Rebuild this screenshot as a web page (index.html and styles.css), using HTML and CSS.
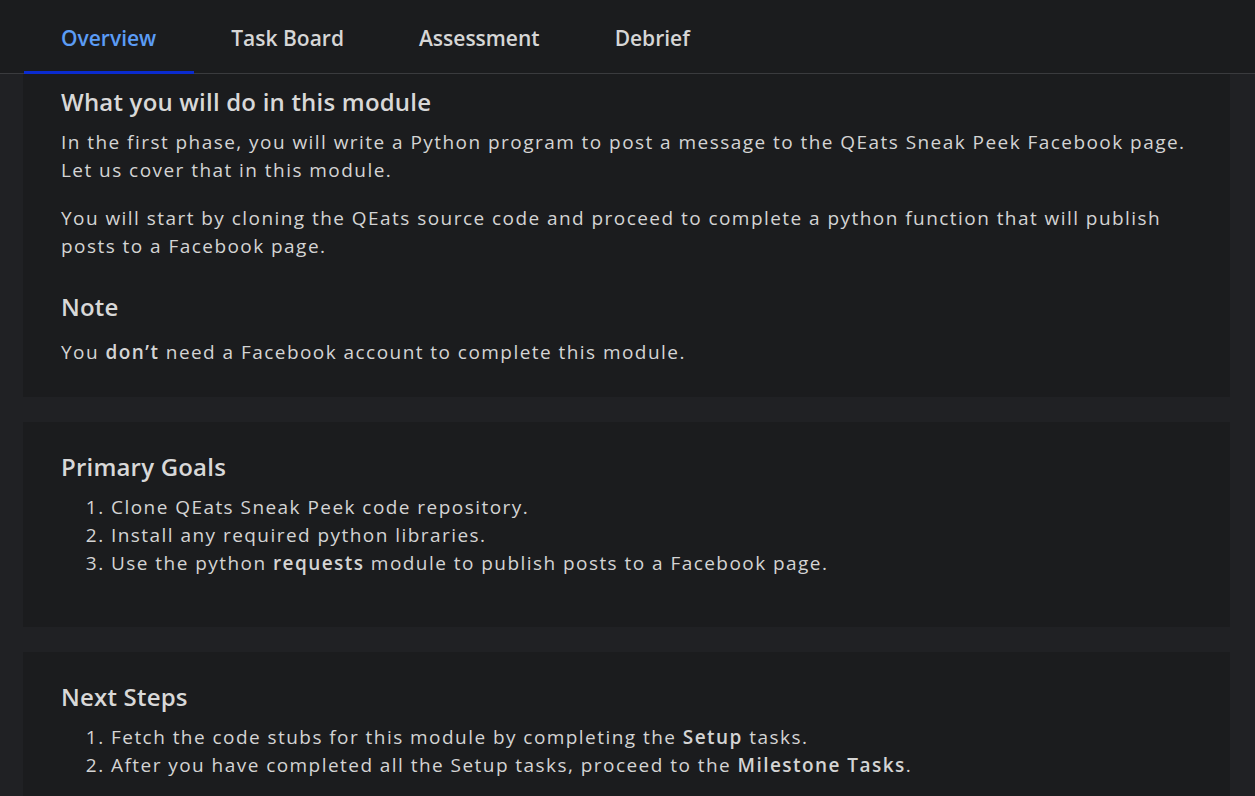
FILE: index.html
```html
<!DOCTYPE html>
<html lang="en">
<head>
<meta charset="utf-8">
<title>Module Overview</title>
<link rel="stylesheet" href="styles.css">
</head>
<body>
<header class="tabbar">
  <nav class="tabs">
    <a class="tab active">Overview</a>
    <a class="tab">Task Board</a>
    <a class="tab">Assessment</a>
    <a class="tab">Debrief</a>
  </nav>
</header>
<main class="content">
  <section class="card card-first">
    <h2 class="card-title">What you will do in this module</h2>
    <p class="text">In the first phase, you will write a Python program to post a message to the QEats Sneak Peek Facebook page. Let us cover that in this module.</p>
    <p class="text">You will start by cloning the QEats source code and proceed to complete a python function that will publish posts to a Facebook page.</p>
    <h2 class="card-title note-title">Note</h2>
    <p class="text">You <strong>don’t</strong> need a Facebook account to complete this module.</p>
  </section>
  <section class="card">
    <h2 class="card-title">Primary Goals</h2>
    <ol class="list">
      <li>Clone QEats Sneak Peek code repository.</li>
      <li>Install any required python libraries.</li>
      <li>Use the python <strong>requests</strong> module to publish posts to a Facebook page.</li>
    </ol>
  </section>
  <section class="card">
    <h2 class="card-title">Next Steps</h2>
    <ol class="list">
      <li>Fetch the code stubs for this module by completing the <strong>Setup</strong> tasks.</li>
      <li>After you have completed all the Setup tasks, proceed to the <strong>Milestone Tasks</strong>.</li>
    </ol>
  </section>
</main>
</body>
</html>
```
FILE: styles.css
```css
html, body {
  margin: 0;
  padding: 0;
}
body {
  background: #202124;
  color: #d4d4d4;
  font-family: "Open Sans", "Noto Sans", sans-serif;
  height: 796px;
  overflow: hidden;
}
.tabbar {
  background: #1b1c1e;
  border-bottom: 1px solid #3a3b3e;
  height: 74px;
  box-sizing: border-box;
}
.tabs {
  display: flex;
  padding-left: 23.5px;
  height: 100%;
}
.tab {
  display: flex;
  align-items: center;
  padding: 4px 37.5px 0;
  font-size: 21px;
  font-weight: 600;
  color: #d6d6d6;
  border-bottom: 3px solid transparent;
  box-sizing: border-box;
  height: 74px;
}
.tab.active {
  color: #5b9cf6;
  border-bottom-color: #0a2bd0;
}
.content {
  display: flex;
  flex-direction: column;
  gap: 25px;
  padding: 0 25px 0 23px;
}
.card {
  background: #1b1c1e;
  padding: 29px 38px 50px;
}
.card-first {
  padding-top: 12px;
  padding-bottom: 31px;
}
.card-title {
  margin: 0 0 10px;
  font-size: 24px;
  line-height: 32px;
  font-weight: 600;
  letter-spacing: 0.2px;
  color: #d8d8d8;
}
.note-title {
  margin-top: 31px;
  margin-bottom: 15px;
}
.text {
  margin: 0 0 20px;
  font-size: 19px;
  line-height: 28px;
  letter-spacing: 1.45px;
}
.text:last-child {
  margin-bottom: 0;
}
.list {
  margin: 0;
  padding-left: 50px;
  font-size: 19px;
  line-height: 28px;
  letter-spacing: 1.45px;
}
strong {
  font-weight: 600;
}
```
